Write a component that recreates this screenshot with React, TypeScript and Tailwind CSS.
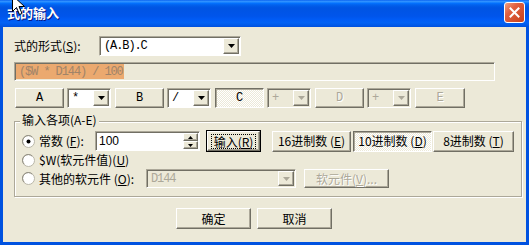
import React from "react";

const raised =
  "border border-t-white border-l-white border-r-[#716F64] border-b-[#716F64] shadow-[inset_-1px_-1px_0_#ACA899] bg-[#ECE9D8]";
const sunken =
  "border border-t-[#ACA899] border-l-[#ACA899] border-r-white border-b-white shadow-[inset_1px_1px_0_#716F64]";
const pressed =
  "border border-t-[#716F64] border-l-[#716F64] border-r-white border-b-white shadow-[inset_1px_1px_0_#ACA899] bg-[image:repeating-conic-gradient(#ffffff_0_25%,#ECE9D8_0_50%)] bg-[length:2px_2px]";
const grayText = "text-[#ACA899] [text-shadow:1px_1px_0_#ffffff]";
const mono = "font-['Liberation_Mono',monospace] text-[12px] tracking-[-1.1px]";

type BtnProps = {
  className?: string;
  children: React.ReactNode;
  disabled?: boolean;
  down?: boolean;
};

const Btn = ({ className = "", children, disabled, down }: BtnProps) => (
  <div
    className={`flex shrink-0 items-center justify-center whitespace-nowrap ${down ? pressed : raised} ${
      disabled ? grayText : "text-black"
    } ${className}`}
  >
    {children}
  </div>
);

const Arrow = ({ disabled }: { disabled?: boolean }) => (
  <div className={`flex h-full w-[16px] shrink-0 items-center justify-center ${raised}`}>
    <svg width="7" height="4" viewBox="0 0 7 4">
      <path d="M0 0h7L3.5 4z" fill={disabled ? "#ACA899" : "#000"} />
    </svg>
  </div>
);

type ComboProps = {
  className?: string;
  value: string;
  disabled?: boolean;
};

const Combo = ({ className = "", value, disabled }: ComboProps) => (
  <div
    className={`flex shrink-0 p-px ${sunken} ${disabled ? "bg-[#ECE9D8]" : "bg-white"} ${className}`}
  >
    <span
      className={`flex flex-1 items-center pl-[3px] ${mono} ${disabled ? "text-[#ACA899]" : "text-black"}`}
    >
      {value}
    </span>
    <Arrow disabled={disabled} />
  </div>
);

const Radio = ({ checked }: { checked?: boolean }) => (
  <svg width="13" height="13" viewBox="0 0 13 13" className="shrink-0">
    <circle cx="6.5" cy="6.5" r="6" fill="#ffffff" stroke="#B9B6A8" />
    <path d="M2.2 10.2A5.2 5.2 0 0 1 10.2 2.2" fill="none" stroke="#8E8B7E" strokeWidth="1" />
    {checked && <circle cx="6.5" cy="6.5" r="2" fill="#000" />}
  </svg>
);

const Spin = () => (
  <div className={`flex h-[20px] w-[105px] shrink-0 bg-white p-px ${sunken}`}>
    <span className="flex flex-1 items-center pl-[2px] font-['Liberation_Sans',sans-serif]">100</span>
    <div className="flex w-[15px] flex-col">
      <div className={`flex flex-1 items-center justify-center ${raised}`}>
        <svg width="5" height="3" viewBox="0 0 5 3">
          <path d="M2.5 0L5 3H0z" fill="#000" />
        </svg>
      </div>
      <div className={`flex flex-1 items-center justify-center ${raised}`}>
        <svg width="5" height="3" viewBox="0 0 5 3">
          <path d="M0 0h5L2.5 3z" fill="#000" />
        </svg>
      </div>
    </div>
  </div>
);

const Cursor = () => (
  <svg width="14" height="21" viewBox="0 0 14 21" className="absolute left-[12px] top-[-5px]">
    <path
      d="M0.5 0.5V16.5L4.5 12.5L7.5 19.5L10 18.5L7 11.5H12.5Z"
      fill="#ffffff"
      stroke="#000"
      strokeWidth="1"
    />
  </svg>
);

export default function App() {
  return (
    <div className="relative flex h-[245px] w-[529px] select-none flex-col overflow-hidden bg-[#0052E0] font-['Noto_Sans_CJK_SC','Liberation_Sans',sans-serif] text-[12px] leading-[14px] text-black">
      {/* title bar */}
      <div className="flex h-[27px] shrink-0 items-start bg-[linear-gradient(180deg,#0058EE_0%,#3593FF_4%,#288EFF_7%,#127DFF_10%,#036FFC_13%,#0262EE_18%,#0057E5_26%,#0054E3_32%,#0055EB_60%,#005BF5_72%,#0262F4_84%,#0058E8_94%,#0050DC_100%)] pl-[7px] pr-[4px]">
        <span className="mt-[5px] text-[13px] font-bold leading-[16px] text-white [text-shadow:1px_1px_0_#0A1883]">
          式的输入
        </span>
        <div className="ml-auto mt-[2px] flex h-[21px] w-[21px] items-center justify-center rounded-[3px] border border-white bg-[linear-gradient(135deg,#F0A080_0%,#E06040_35%,#C8411C_100%)]">
          <svg width="11" height="11" viewBox="0 0 11 11">
            <path d="M1.5 1.5L9.5 9.5M9.5 1.5L1.5 9.5" stroke="#ffffff" strokeWidth="2" strokeLinecap="square" />
          </svg>
        </div>
      </div>

      {/* dialog body */}
      <div className="mx-[3px] mb-[3px] flex flex-1 flex-col bg-[#ECE9D8] pl-[11px]">
        <div className="mt-[9px] flex h-[20px] items-center">
          <span className="w-[85px] shrink-0">
            式的形式(<u>S</u>):
          </span>
          <Combo className="h-[20px] w-[142px]" value="(A.B).C" />
        </div>

        <div className={`mt-[6px] flex h-[19px] w-[481px] bg-[#ECE9D8] p-px ${sunken}`}>
          <span className={`flex w-[108px] items-center bg-[#EBA96F] pl-[3px] ${mono} text-[#A08469]`}>
            ($W * D144) / 100
          </span>
        </div>

        <div className="ml-px mt-[7px] flex h-[20px] font-['Liberation_Mono',monospace] text-[12px]">
          <Btn className="w-[49px]">A</Btn>
          <Combo className="ml-[3px] w-[44px]" value="*" />
          <Btn className="ml-[4px] w-[49px]">B</Btn>
          <Combo className="ml-[3px] w-[44px]" value="/" />
          <Btn className="ml-[4px] w-[49px]" down>
            C
          </Btn>
          <Combo className="ml-[3px] w-[44px]" value="+" disabled />
          <Btn className="ml-[4px] w-[49px]" disabled>
            D
          </Btn>
          <Combo className="ml-[3px] w-[44px]" value="+" disabled />
          <Btn className="ml-[4px] w-[50px]" disabled>
            E
          </Btn>
        </div>

        {/* group box */}
        <div className="relative mt-[13px] flex h-[76px] w-[508px] flex-col border border-[#ACA899] pl-[7px] pt-[8px] shadow-[inset_1px_1px_0_#ffffff,1px_1px_0_#ffffff]">
          <span className="absolute left-[5px] top-[-9px] bg-[#ECE9D8] px-[2px]">输入各项(A-E)</span>

          <div className="flex h-[22px] items-center">
            <div className="flex w-[73px] shrink-0 items-center gap-[4px]">
              <Radio checked />
              <span>
                常数 (<u>F</u>):
              </span>
            </div>
            <Spin />
            <div className="ml-[6px] h-[22px] w-[55px] shrink-0 border border-black">
              <Btn className="h-full w-full">
                <span className="border border-dotted border-black px-[2px] leading-[13px]">
                  输入(<u>R</u>)
                </span>
              </Btn>
            </div>
            <Btn className="ml-[11px] h-[21px] w-[79px]">
              16进制数 (<u>E</u>)
            </Btn>
            <Btn className="ml-[2px] h-[21px] w-[79px]" down>
              10进制数 (<u>D</u>)
            </Btn>
            <Btn className="ml-px h-[21px] w-[81px]">
              8进制数 (<u>T</u>)
            </Btn>
          </div>

          <div className="flex h-[16px] items-center gap-[4px]">
            <Radio />
            <span>
              $W(软元件值)(<u>U</u>)
            </span>
          </div>

          <div className="mt-px flex h-[19px] items-center">
            <div className="flex w-[124px] shrink-0 items-center gap-[4px]">
              <Radio />
              <span>
                其他的软元件 (<u>O</u>):
              </span>
            </div>
            <Combo className="h-[19px] w-[150px]" value="D144" disabled />
            <Btn className="ml-[8px] h-[19px] w-[85px]" disabled>
              软元件(<u>V</u>)...
            </Btn>
          </div>
        </div>

        <div className="ml-[162px] mt-[11px] flex gap-[6px]">
          <Btn className="h-[21px] w-[75px]">确定</Btn>
          <Btn className="h-[21px] w-[75px]">取消</Btn>
        </div>
      </div>

      <Cursor />
    </div>
  );
}
